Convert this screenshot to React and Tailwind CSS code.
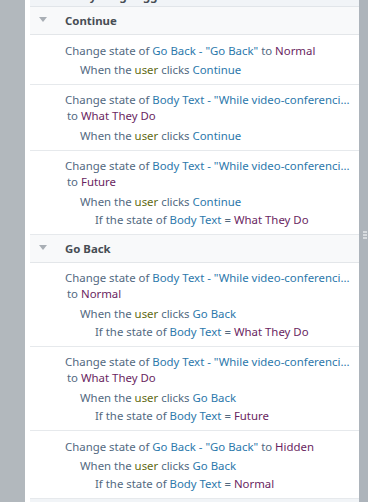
import React from 'react';

const S = ({ c, children }) => {
  const cls = {
    t: 'text-[#52697f]',
    e: 'text-[#2c78ab]',
    v: 'text-[#6a1f5f]',
    u: 'text-[#5f6a14]',
  }[c];
  return <span className={cls}>{children}</span>;
};

function Trigger({ el }) {
  return (
    <div className="pl-[50px] h-[19px] leading-[19px] whitespace-nowrap">
      <S c="t">When the </S>
      <S c="u">user</S>
      <S c="t"> clicks </S>
      <S c="e">{el}</S>
    </div>
  );
}

function Cond({ value }) {
  return (
    <div className="pl-[65px] h-[18px] leading-[18px] whitespace-nowrap">
      <S c="t">If the state of </S>
      <S c="e">Body Text</S>
      <S c="t"> = </S>
      <S c="v">{value}</S>
    </div>
  );
}

function ShortAction({ to, trig, cond }) {
  return (
    <div className="border-b border-[#e6e9ec] pt-[7px] pb-[5px]">
      <div className="pl-[35px] h-[17px] leading-[17px] whitespace-nowrap">
        <S c="t">Change state of </S>
        <S c="e">Go Back - "Go Back"</S>
        <S c="t"> to </S>
        <S c="v">{to}</S>
      </div>
      <div className="mt-[1px]">
        <Trigger el={trig} />
        {cond && <Cond value={cond} />}
      </div>
    </div>
  );
}

function LongAction({ to, trig, cond }) {
  return (
    <div className="border-b border-[#e6e9ec] pt-[7px] pb-[5px]">
      <div className="pl-[35px] h-[16px] leading-[16px] whitespace-nowrap">
        <S c="t">Change state of </S>
        <S c="e">Body Text - "While video-conferenci...</S>
      </div>
      <div className="pl-[37px] h-[16px] leading-[16px] whitespace-nowrap">
        <S c="t">to </S>
        <S c="v">{to}</S>
      </div>
      <div className="mt-[2px]">
        <Trigger el={trig} />
        {cond && <Cond value={cond} />}
      </div>
    </div>
  );
}

function Header({ title }) {
  return (
    <div className="flex items-center h-[28px] bg-[#f8f9fa] border-b border-[#e3e6e9]">
      <svg width="8" height="5" viewBox="0 0 8 5" className="ml-[9px] mt-[-2px]">
        <path d="M0 0 L8 0 L4 5 Z" fill="#a9afb5" />
      </svg>
      <span className="ml-[18px] font-bold text-[#474d54]">{title}</span>
    </div>
  );
}

export default function App() {
  return (
    <div
      className="w-[368px] h-[502px] overflow-hidden flex bg-[#adb4bb] text-[11.4px]"
      style={{ fontFamily: '"Segoe UI", "Noto Sans", "Open Sans", sans-serif' }}
    >
      <div className="w-[25px] shrink-0 bg-[#b2b8bd]" />
      <div className="w-[334px] shrink-0 bg-white pl-[5px] overflow-hidden">
        <div className="h-[7px] bg-[#f1f4f7] border-b border-[#e1e5e9] overflow-hidden">
          <div className="pl-[35px] mt-[-13px] font-bold text-[#474d54] whitespace-nowrap">Everything triggers</div>
        </div>
        <Header title="Continue" />
        <ShortAction to="Normal" trig="Continue" />
        <LongAction to="What They Do" trig="Continue" />
        <LongAction to="Future" trig="Continue" cond="What They Do" />
        <Header title="Go Back" />
        <LongAction to="Normal" trig="Go Back" cond="What They Do" />
        <LongAction to="What They Do" trig="Go Back" cond="Future" />
        <ShortAction to="Hidden" trig="Go Back" cond="Normal" />
        <div className="h-[10px] bg-[#f1f4f7]" />
      </div>
      <div className="flex-1 flex items-center justify-end pr-[1px]">
        <div className="flex flex-col gap-[1px] mt-[-32px]">
          <div className="w-[4px] h-[2px] bg-[#d7dbdf]" />
          <div className="w-[4px] h-[2px] bg-[#d7dbdf]" />
          <div className="w-[4px] h-[2px] bg-[#d7dbdf]" />
        </div>
      </div>
    </div>
  );
}
